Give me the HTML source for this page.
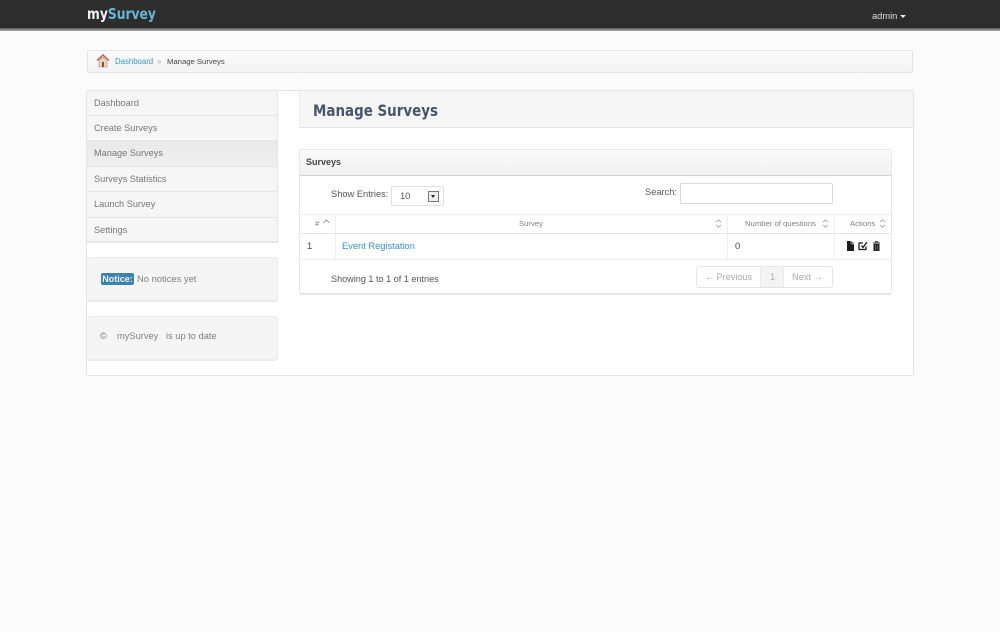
<!DOCTYPE html>
<html>
<head>
<meta charset="utf-8">
<style>
html,body{margin:0;padding:0}
body{width:1000px;height:632px;position:relative;overflow:hidden;background-color:#fcfcfc;background-image:repeating-linear-gradient(45deg,rgba(0,0,0,.012) 0 1px,transparent 1px 3px);font-family:"Liberation Sans",sans-serif;color:#555}
.a{position:absolute;box-sizing:border-box;white-space:nowrap}
.t{position:absolute;white-space:nowrap;line-height:14px}
.nav{left:87px;width:190px;padding-left:7px;font-size:9.2px;color:#777;background:#f6f6f6;border-bottom:1px solid #e6e6e6}
.box{left:87px;width:191px;background:#f5f5f5;border:1px solid #e9e9e9;border-left:0;border-bottom:2px solid #ebebeb;border-radius:3px}
.th{font-size:7.7px;color:#808080}
.sort{position:absolute;width:7px;height:9px}
</style>
</head>
<body>
<!-- top bar -->
<div class="a" style="left:0;top:0;width:1000px;height:28px;background:#2d2d2d"></div>
<div class="a" style="left:0;top:28px;width:1000px;height:3px;background:linear-gradient(#5a5a5a,#aaa)"></div>
<div class="t" style="left:87px;top:7px;font-size:15px;font-weight:bold;color:#f2f2f2;font-family:'DejaVu Sans',sans-serif;transform-origin:left;transform:scaleX(.82)">my<span style="color:#69b7d8">Survey</span></div>
<div class="t" style="left:872px;top:9px;font-size:9.300px;color:#ddd">admin</div>
<div class="a" style="left:900px;top:15px;border:3px solid transparent;border-top-color:#eee;border-bottom:0"></div>

<!-- breadcrumb -->
<div class="a" style="left:87px;top:50px;width:826px;height:23px;background:linear-gradient(#fbfbfb,#f3f3f3);border:1px solid #e4e4e4;border-radius:2px"></div>
<svg class="a" style="left:96px;top:54px" width="14" height="14" viewBox="0 0 14 14">
<path d="M1 6.500 7 1l6 5.500" fill="none" stroke="#b0664b" stroke-width="1.400"/>
<path d="M3 6.500 7 3l4 3.500V13H3z" fill="#e8d5c5" stroke="#a9866f" stroke-width=".6"/>
<rect x="6" y="8" width="2" height="5" fill="#8a4b36"/>
</svg>
<div class="t" style="left:115px;top:55px;font-size:7.800px;color:#3c94c4">Dashboard</div>
<div class="t" style="left:157px;top:55px;font-size:8px;color:#aaa">»</div>
<div class="t" style="left:167px;top:55px;font-size:7.700px;color:#444">Manage Surveys</div>

<!-- main panel -->
<div class="a" style="left:86px;top:90px;width:828px;height:286px;background:#fff;border:1px solid #e4e4e4;border-radius:2px"></div>

<!-- sidebar -->
<div class="a" style="left:87px;top:91px;width:191px;height:152px;background:#f6f6f6;border-right:1px solid #e6e6e6;border-bottom:2px solid #e8e8e8"></div>
<div class="a nav" style="top:91px;height:25px;line-height:24px">Dashboard</div>
<div class="a nav" style="top:116px;height:25px;line-height:25px">Create Surveys</div>
<div class="a nav" style="top:141px;height:26px;line-height:25px;background:linear-gradient(#e9e9e9,#efefef)">Manage Surveys</div>
<div class="a nav" style="top:167px;height:25px;line-height:24px">Surveys Statistics</div>
<div class="a nav" style="top:192px;height:26px;line-height:25px">Launch Survey</div>
<div class="a nav" style="top:218px;height:23px;line-height:24px;border-bottom:0">Settings</div>

<div class="a box" style="top:257px;height:45px"></div>
<div class="a" style="left:101px;top:273px;width:33px;height:12px;background:#3a82aa;border-radius:2px;color:#e9f2f7;font-size:9px;font-weight:bold;line-height:12px;text-align:center">Notice:</div>
<div class="t" style="left:137px;top:272px;font-size:9.400px;color:#808080">No notices yet</div>

<div class="a box" style="top:316px;height:45px"></div>
<div class="t" style="left:100px;top:330px;font-size:9.500px;color:#777">©</div>
<div class="t" style="left:117px;top:329px;font-size:9.300px;color:#808080">mySurvey</div>
<div class="t" style="left:166px;top:329px;font-size:9.300px;color:#808080">is up to date</div>

<!-- page title -->
<div class="a" style="left:299px;top:91px;width:614px;height:37px;background:#f6f6f6;border-bottom:1px solid #e0e0e0;border-left:1px solid #ececec"></div>
<div class="t" style="left:313px;top:101px;font-size:16px;line-height:20px;font-weight:bold;color:#44566c;font-family:'DejaVu Sans',sans-serif;transform-origin:left;transform:scaleX(.84)">Manage Surveys</div>

<!-- surveys card -->
<div class="a" style="left:299px;top:149px;width:593px;height:146px;background:#fff;border:1px solid #e6e6e6;border-bottom:2px solid #e4e4e4;border-radius:3px"></div>
<div class="a" style="left:299px;top:149px;width:593px;height:27px;background:linear-gradient(#fbfbfb,#f1f1f1);border:1px solid #e6e6e6;border-bottom:1px solid #d6d6d6;border-radius:3px 3px 0 0"></div>
<div class="t" style="left:306px;top:155px;font-size:9px;font-weight:bold;color:#444">Surveys</div>

<div class="t" style="left:331px;top:187px;font-size:9.300px;color:#555">Show Entries:</div>
<div class="a" style="left:391px;top:186px;width:53px;height:20px;background:#fff;border:1px solid #e0e0e0;border-radius:2px"></div>
<div class="t" style="left:400px;top:189px;font-size:9.300px;color:#555">10</div>
<div class="a" style="left:428px;top:191px;width:11px;height:11px;background:#eee;border:1px solid #777"></div>
<div class="a" style="left:431px;top:195px;border:2.500px solid transparent;border-top:3px solid #222;border-bottom:0"></div>

<div class="t" style="left:645px;top:185px;font-size:9.300px;color:#555">Search:</div>
<div class="a" style="left:680px;top:183px;width:153px;height:21px;background:#fff;border:1px solid #dadada;border-radius:2px"></div>

<!-- table lines -->
<div class="a" style="left:300px;top:214px;width:591px;height:1px;background:#ebebeb"></div>
<div class="a" style="left:300px;top:233px;width:591px;height:1px;background:#e6e6e6"></div>
<div class="a" style="left:300px;top:259px;width:591px;height:1px;background:#ebebeb"></div>
<div class="a" style="left:335px;top:214px;width:1px;height:46px;background:#eee"></div>
<div class="a" style="left:727px;top:214px;width:1px;height:46px;background:#eee"></div>
<div class="a" style="left:834px;top:214px;width:1px;height:46px;background:#eee"></div>

<!-- headers -->
<div class="t th" style="left:315px;top:217px">#</div>
<svg class="sort" style="left:323px;top:219px"><path d="M.5 4 3.500 1 6.500 4" fill="none" stroke="#888" stroke-width=".8"/></svg>
<div class="t th" style="left:519px;top:217px">Survey</div>
<svg class="sort" style="left:715px;top:219px"><path d="M1 3 3.500 .8 6 3M1 6 3.500 8.200 6 6" fill="none" stroke="#999" stroke-width=".8"/></svg>
<div class="t th" style="left:745px;top:217px">Number of questions</div>
<svg class="sort" style="left:822px;top:219px"><path d="M1 3 3.500 .8 6 3M1 6 3.500 8.200 6 6" fill="none" stroke="#999" stroke-width=".8"/></svg>
<div class="t th" style="left:850px;top:217px">Actions</div>
<svg class="sort" style="left:879px;top:219px"><path d="M1 3 3.500 .8 6 3M1 6 3.500 8.200 6 6" fill="none" stroke="#999" stroke-width=".8"/></svg>

<!-- row -->
<div class="t" style="left:307px;top:239px;font-size:9.300px;color:#444">1</div>
<div class="t" style="left:342px;top:239px;font-size:9.300px;color:#3a8fc0">Event Registation</div>
<div class="t" style="left:735px;top:239px;font-size:9.300px;color:#444">0</div>
<svg class="a" style="left:846px;top:240px" width="36" height="12" viewBox="0 0 36 12">
<path d="M1 1h4l3 3v7H1z" fill="#1c1c1c"/>
<path d="M5 1v3h3" fill="none" stroke="#fff" stroke-width=".5"/>
<path d="M20 6.500V9.500H13V3h4" fill="none" stroke="#1c1c1c" stroke-width="1.300" stroke-linejoin="round"/>
<path d="M15.500 5.500 17 7.500l4-5.500" fill="none" stroke="#1c1c1c" stroke-width="1.300"/>
<path d="M27 2.500h7v1h-7zM29 1.200h3v1h-3z" fill="#222"/>
<path d="M27.500 4h6v7h-6z" fill="#222"/>
<path d="M29.300 5v5M31.700 5v5" stroke="#888" stroke-width=".5"/>
</svg>

<!-- footer -->
<div class="t" style="left:331px;top:272px;font-size:9.100px;color:#555">Showing 1 to 1 of 1 entries</div>
<div class="a" style="left:696px;top:266px;width:137px;height:22px;background:#fff;border:1px solid #e4e4e4;border-radius:3px"></div>
<div class="a" style="left:760px;top:267px;width:24px;height:20px;background:#f3f3f3;border-left:1px solid #e8e8e8;border-right:1px solid #e8e8e8"></div>
<div class="t" style="left:705px;top:270px;font-size:9.100px;color:#aaa">← Previous</div>
<div class="t" style="left:770px;top:270px;font-size:9.300px;color:#aaa">1</div>
<div class="t" style="left:792px;top:270px;font-size:9.300px;color:#aaa">Next →</div>
</body>
</html>
